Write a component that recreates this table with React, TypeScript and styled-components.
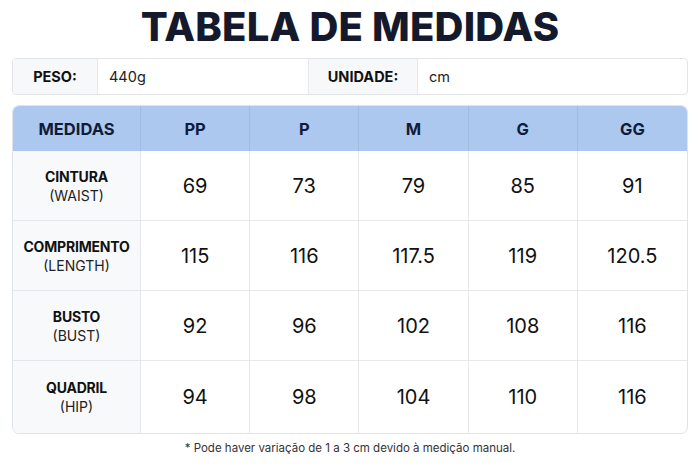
import styled, { createGlobalStyle } from 'styled-components';

const GlobalStyle = createGlobalStyle`
  html, body {
    margin: 0;
    padding: 0;
    background: #ffffff;
    font-family: Inter, "Noto Sans", sans-serif;
    color: #111111;
  }
`;

const sizes = ['PP', 'P', 'M', 'G', 'GG'];

const rows = [
  { name: 'CINTURA', en: '(WAIST)', values: ['69', '73', '79', '85', '91'] },
  { name: 'COMPRIMENTO', en: '(LENGTH)', values: ['115', '116', '117.5', '119', '120.5'] },
  { name: 'BUSTO', en: '(BUST)', values: ['92', '96', '102', '108', '116'] },
  { name: 'QUADRIL', en: '(HIP)', values: ['94', '98', '104', '110', '116'] },
];

const App = () => {
  return (
    <Page>
      <GlobalStyle />
      <Title>TABELA DE MEDIDAS</Title>
      <InfoBar>
        <InfoLabel>PESO:</InfoLabel>
        <InfoValue>440g</InfoValue>
        <InfoLabel>UNIDADE:</InfoLabel>
        <InfoValue>cm</InfoValue>
      </InfoBar>
      <Table>
        <HeadCell>MEDIDAS</HeadCell>
        {sizes.map((s, i) => (
          <HeadCell key={s} $last={i === sizes.length - 1}>
            {s}
          </HeadCell>
        ))}
        {rows.map((r, ri) => {
          const lastRow = ri === rows.length - 1;
          return [
            <RowLabel key={r.name} $lastRow={lastRow}>
              <strong>{r.name}</strong>
              <span>{r.en}</span>
            </RowLabel>,
            ...r.values.map((v, vi) => (
              <ValueCell
                key={r.name + vi}
                $lastRow={lastRow}
                $last={vi === r.values.length - 1}
              >
                {v}
              </ValueCell>
            )),
          ];
        })}
      </Table>
      <Note>* Pode haver variação de 1 a 3 cm devido à medição manual.</Note>
    </Page>
  );
};

const Page = styled.div`
  width: 700px;
  height: 467px;
  box-sizing: border-box;
  padding: 0 12px;
  display: flex;
  flex-direction: column;
`;

const Title = styled.h1`
  margin: 4px 0 0;
  height: 54px;
  font-size: 40px;
  line-height: 46px;
  font-weight: 800;
  text-align: center;
  color: #141a2b;
  letter-spacing: 0.2px;
`;

const InfoBar = styled.div`
  display: grid;
  grid-template-columns: 85px 211px 109px 1fr;
  height: 37px;
  box-sizing: border-box;
  border: 1px solid #e2e4e8;
  border-radius: 4px;
  overflow: hidden;
`;

const InfoLabel = styled.div`
  display: flex;
  align-items: center;
  justify-content: center;
  background: #f7f8fa;
  font-weight: 700;
  font-size: 14.5px;
  color: #111;
  border-right: 1px solid #e6e8ec;
`;

const InfoValue = styled.div`
  display: flex;
  align-items: center;
  padding-left: 11px;
  font-size: 14.5px;
  color: #222;
  border-right: 1px solid #e6e8ec;
  &:last-child {
    border-right: none;
  }
`;

const Table = styled.div`
  margin-top: 10px;
  display: grid;
  grid-template-columns: 128px repeat(5, 1fr);
  grid-template-rows: 45px 70px 70px 70px 72px;
  border: 1px solid #e0e3e8;
  border-radius: 7px;
  overflow: hidden;
`;

const HeadCell = styled.div<{ $last?: boolean }>`
  display: flex;
  align-items: center;
  justify-content: center;
  background: #adc8ee;
  font-weight: 700;
  font-size: 16.5px;
  color: #101c3c;
  border-right: ${(p) => (p.$last ? 'none' : '1px solid #9fbae3')};
`;

const RowLabel = styled.div<{ $lastRow?: boolean }>`
  display: flex;
  flex-direction: column;
  align-items: center;
  justify-content: center;
  gap: 2px;
  background: #f8f9fb;
  border-right: 1px solid #e3e6ea;
  border-bottom: ${(p) => (p.$lastRow ? 'none' : '1px solid #e3e6ea')};
  font-size: 14px;
  color: #111;
  strong {
    font-weight: 700;
    letter-spacing: -0.2px;
  }
  span {
    font-weight: 400;
    color: #222;
  }
`;

const ValueCell = styled.div<{ $last?: boolean; $lastRow?: boolean }>`
  display: flex;
  align-items: center;
  justify-content: center;
  font-size: 20px;
  color: #111;
  border-right: ${(p) => (p.$last ? 'none' : '1px solid #e6e8ec')};
  border-bottom: ${(p) => (p.$lastRow ? 'none' : '1px solid #e6e8ec')};
`;

const Note = styled.p`
  margin: 7px 0 0;
  text-align: center;
  font-size: 11.5px;
  color: #333;
`;

export default App;
